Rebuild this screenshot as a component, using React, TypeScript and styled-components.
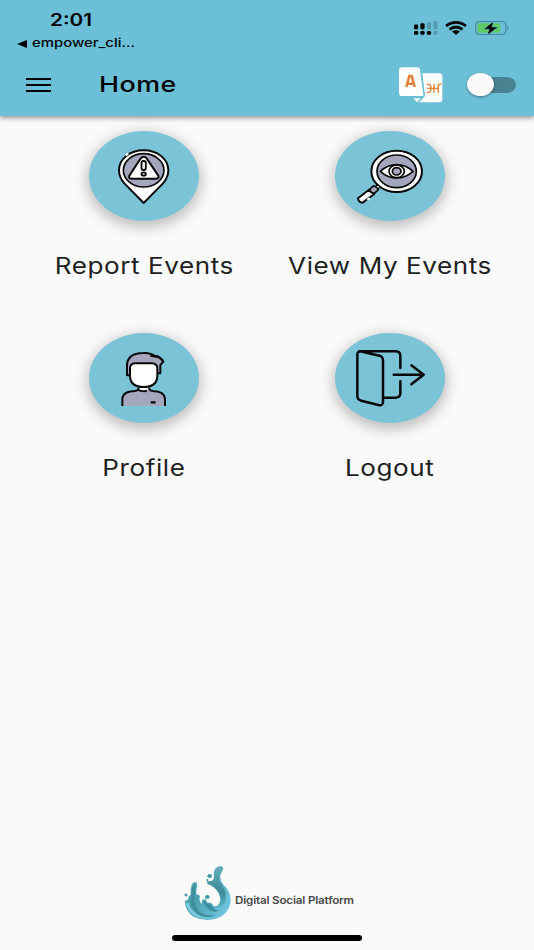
import React from "react";
import styled, { createGlobalStyle } from "styled-components";

const Global = createGlobalStyle`
  * { box-sizing: border-box; }
  body { margin: 0; background: #fafafa; }
`;

const Screen = styled.div`
  width: 534px;
  height: 950px;
  display: flex;
  flex-direction: column;
  overflow: hidden;
  background: #fafafa;
  color: #000;
  font-family: Inter, "Liberation Sans", sans-serif;
`;

const Header = styled.header`
  height: 116px;
  flex: none;
  background: #6bc0d8;
  box-shadow: 0 2px 5px rgba(0, 0, 0, 0.42);
`;

const StatusBar = styled.div`
  height: 53px;
  display: flex;
  justify-content: space-between;
  padding: 10px 24px 0 17px;
`;

const StatusLeft = styled.div`
  display: flex;
  flex-direction: column;
`;

const Wide = styled.span<{ $size: number; $weight?: number; $scale?: number; $spacing?: number }>`
  display: block;
  white-space: nowrap;
  line-height: 1.2;
  font-size: ${(p) => p.$size}px;
  font-weight: ${(p) => p.$weight ?? 400};
  letter-spacing: ${(p) => p.$spacing ?? 0}px;
  transform: scaleX(${(p) => p.$scale ?? 1.22});
  transform-origin: left center;
`;

const TileLabel = styled(Wide)`
  color: #1f1f1f;
  transform-origin: center;
`;

const Clock = styled.div`
  height: 25px;
  padding-left: 33px;
`;

const BackLink = styled.div`
  display: flex;
  align-items: center;
  gap: 5px;
  height: 17px;
`;

const StatusIcons = styled.div`
  display: flex;
  align-items: flex-start;
  padding-top: 11px;
`;

const Toolbar = styled.div`
  height: 63px;
  display: flex;
  align-items: center;
  padding: 0 18px 0 26px;
`;

const MenuButton = styled.button`
  width: 25px;
  height: 14px;
  padding: 0;
  border: 0;
  background: none;
  display: flex;
  flex-direction: column;
  justify-content: space-between;
`;

const MenuLine = styled.span`
  width: 100%;
  height: 2px;
  background: #000;
`;

const Title = styled.div`
  margin-left: 48px;
  flex: 1;
`;

const Switch = styled.div`
  width: 49px;
  height: 24px;
  margin-left: 24px;
  display: flex;
  align-items: center;
`;

const Track = styled.div`
  width: 42px;
  height: 16px;
  margin-left: 7px;
  flex: none;
  border-radius: 9px / 8px;
  background: #498291;
  display: flex;
  align-items: center;
`;

const Thumb = styled.div`
  width: 27px;
  height: 23px;
  flex: none;
  margin-left: -7px;
  border-radius: 50%;
  background: #fafafa;
  box-shadow: 0 1px 3px rgba(0, 0, 0, 0.4);
`;

const Grid = styled.main`
  flex: 1;
  display: grid;
  grid-template-columns: 246px 246px;
  grid-auto-rows: 202px;
  align-content: start;
  padding: 15px 21px 0;
`;

const Tile = styled.div`
  display: flex;
  flex-direction: column;
  align-items: center;
  gap: 31px;
`;

const Disc = styled.div`
  width: 110px;
  height: 90px;
  border-radius: 50%;
  background: #7bc3d6;
  box-shadow: 0 4px 14px 2px rgba(0, 0, 0, 0.25);
  & > svg { display: block; }
`;

const Footer = styled.footer`
  display: flex;
  flex-direction: column;
  align-items: center;
  height: 85px;
`;

const Brand = styled.div`
  width: 167px;
  height: 56px;
  display: flex;
  align-items: center;
  gap: 3px;
  color: #4a4a4a;
`;

const BrandName = styled.div`
  padding-top: 16px;
`;

const HomeBar = styled.div`
  width: 190px;
  height: 6px;
  margin-top: 14px;
  border-radius: 3px;
  background: #000;
`;

const Spacer = styled.span<{ $w: number }>`
  width: ${(p) => p.$w}px;
`;

const Signal = () => (
  <svg width="24" height="14" viewBox="0 0 24 14">
    <g fill="#000">
      <rect x="0" y="3.6" width="4.2" height="4.8" rx="1.3" />
      <rect x="6.4" y="2.3" width="4.2" height="6.1" rx="1.3" />
      <rect x="0" y="10" width="4.2" height="3.7" rx="1.3" />
      <rect x="6.4" y="10" width="4.2" height="3.7" rx="1.3" />
      <rect x="12.9" y="10" width="4.2" height="3.7" rx="1.3" />
    </g>
    <g fill="#559bb0">
      <rect x="12.9" y="1.2" width="4.2" height="7.2" rx="1.3" />
      <rect x="19.3" y="0" width="4.2" height="8.4" rx="1.3" />
      <rect x="19.3" y="10" width="4.2" height="3.7" rx="1.3" />
    </g>
  </svg>
);

const Wifi = () => (
  <svg width="22" height="14" viewBox="0 0 22 14">
    <g fill="none" stroke="#000" strokeWidth="2.8">
      <path d="M1 4.9Q11 -2.3 21 4.9" />
      <path d="M4.5 8.3Q11 3.6 17.5 8.3" />
    </g>
    <path d="M7 10.6Q11 7.6 15 10.6L11 13.7Z" />
  </svg>
);

const Battery = () => (
  <svg width="35" height="16" viewBox="0 0.7 35 16">
    <rect x=".7" y="1.2" width="30.2" height="13" rx="4" fill="none" stroke="#478698" strokeWidth="1.2" />
    <rect x="2.6" y="2.9" width="22.6" height="9.6" rx="2.4" fill="#5ecb62" />
    <path d="M32.4 5.5Q35 7.7 32.4 9.9Z" fill="#478698" />
    <path d="M18.6 1L8.7 8.9H14.2L12.3 15L23 6.7H17Z" fill="#000" stroke="#6bc0d8" strokeWidth=".5" />
  </svg>
);

const TranslateIcon = () => (
  <svg width="44" height="36" viewBox="26 200 132 108">
    <path d="M96 219H147Q156 219 156 229V297Q156 306 147 306H84L103 285Z" fill="#fff" />
    <path d="M36 201H79Q88 201 90 211L100 287H36Q26 287 26 277V211Q26 201 36 201Z" fill="#fff" />
    <path d="M91 207L102 286L84 306" fill="none" stroke="#6bc0d8" strokeWidth="4" />
    <path d="M69 294H91L80 306Z" fill="#fff" />
    <path d="M48 260L57 227H64L73 260M51 250H70" fill="none" stroke="#df8136" strokeWidth="7.5" />
    <path d="M109 252H115Q122 253 122 264T115 276H109M111 264H143M131 250V278M144 278V257Q144 251 153 251" fill="none" stroke="#df8136" strokeWidth="4" />
  </svg>
);

const ReportIcon = () => (
  <svg width="110" height="90" viewBox="27 33 330 270">
    <path d="M191 249L133 190Q117 172 117 151C117 117 150 91 191 91S265 117 265 151Q265 172 249 190Z" fill="#fff" stroke="#090909" strokeWidth="6" strokeLinejoin="round" />
    <ellipse cx="191" cy="151" rx="61" ry="50" fill="#a3a6bd" stroke="#090909" strokeWidth="5" />
    <path d="M182 115Q191 105 200 115L235 167Q238 176 228 176H155Q144 176 148 167Z" fill="#fff" stroke="#090909" strokeWidth="6" />
    <rect x="184.5" y="123" width="13" height="27" rx="6" fill="#fff" stroke="#090909" strokeWidth="5.5" />
    <ellipse cx="191" cy="162" rx="6.5" ry="5" fill="#fff" stroke="#090909" strokeWidth="5.5" />
    <path d="M137 106L145 101" stroke="#fff" strokeWidth="6" />
  </svg>
);

const ViewIcon = () => (
  <svg width="110" height="90" viewBox="30 33 330 270">
    <ellipse cx="215" cy="154" rx="76" ry="62" fill="#fff" stroke="#090909" strokeWidth="6" />
    <ellipse cx="215" cy="154" rx="59" ry="49" fill="#a3a6bd" stroke="#090909" strokeWidth="5" />
    <path d="M166 154Q188 134 215 134T264 154Q242 174 215 174T166 154Z" fill="#fff" stroke="#090909" strokeWidth="5" strokeLinejoin="round" />
    <ellipse cx="215" cy="154" rx="23" ry="19" fill="#fff" stroke="#090909" strokeWidth="5" />
    <ellipse cx="215" cy="154" rx="13" ry="11" fill="#a3a6bd" stroke="#090909" strokeWidth="5" />
    <path d="M148 202L158 194L166 201L156 209Z" fill="#fff" stroke="#090909" strokeWidth="4" />
    <path d="M134 208L145 198Q157 200 160 209L147 221Q136 218 134 208Z" fill="#a3a6bd" stroke="#090909" strokeWidth="5" />
    <path d="M99 235L132 209Q137 219 148 222L113 248Q101 247 99 235Z" fill="#fff" stroke="#090909" strokeWidth="6" strokeLinejoin="round" />
    <path d="M127 240L134 234" stroke="#fff" strokeWidth="6" />
  </svg>
);

const ProfileIcon = () => (
  <svg width="110" height="90" viewBox="27 24 330 270">
    <path d="M127 243V221Q129 199 165 198Q175 197 176 189H207Q208 197 218 198Q253 199 255 221V243Z" fill="#a3a6bd" />
    <path d="M178 186H206V193Q200 202 191 202T177 193Z" fill="#fff" />
    <path d="M127 243V221Q129 199 165 198Q175 197 176 189M255 243V221Q253 199 218 198Q208 197 207 189M173 194Q190 203 201 196" fill="none" stroke="#090909" strokeWidth="6" />
    <path d="M150 151H141V122Q141 85 190 84Q213 83 226 94Q237 92 250 110L241 120V145H232Z" fill="#a3a6bd" stroke="#090909" strokeWidth="6" strokeLinejoin="round" />
    <path d="M150 130Q150 116 165 115H215Q232 116 232 130V154Q230 186 191 186T150 154Z" fill="#fff" stroke="#090909" strokeWidth="6" />
    <path d="M211 92L226 94Q239 94 249 108M212 232H227" fill="none" stroke="#090909" strokeWidth="7" />
  </svg>
);

const LogoutIcon = () => (
  <svg width="110" height="90" viewBox="30 24 330 270">
    <g fill="none" stroke="#090909" strokeWidth="7.5" strokeLinecap="round" strokeLinejoin="round">
      <path d="M103 79H212Q226 80 226 92V129M226 169V206Q225 218 211 218H178M106 79L163 92Q174 95 174 107V230Q174 243 160 240L109 227Q97 224 97 212V89Q97 78 109 79" />
      <path d="M206 149H296M259 121L296 149L259 178" />
    </g>
  </svg>
);

const BrandMark = () => (
  <svg width="48" height="56" viewBox="12 9 144 168">
    <defs>
      <linearGradient id="bowl" x1="0" y1="0" x2="1" y2="0.6">
        <stop offset="0" stopColor="#68b4c1" />
        <stop offset=".45" stopColor="#4ba0ae" />
        <stop offset="1" stopColor="#6bc3dc" />
      </linearGradient>
      <linearGradient id="plume" x1="0" y1="0" x2="0" y2="1">
        <stop offset="0" stopColor="#66b0ba" />
        <stop offset=".6" stopColor="#3c8b99" />
        <stop offset="1" stopColor="#60b8cc" />
      </linearGradient>
    </defs>
    <path
      d="M14 115Q22 119 25 108Q25 101 32 99Q31 62 43 60Q54 60 51 75Q47 88 50 98Q57 97 60 103Q56 113 62 123Q68 128 65 118Q66 110 76 112Q82 116 81 122Q94 119 98 127Q100 136 110 133Q124 124 120 104Q116 89 101 75Q94 67 84 67Q78 62 83 57Q99 60 102 49Q99 28 107 19Q119 9 128 15Q132 20 125 31Q114 49 130 68Q153 87 152 120Q145 157 112 169Q77 181 41 164Q16 150 14 115Z"
      fill="url(#bowl)"
    />
    <path d="M104 42Q102 22 115 16Q127 10 128 18L119 31Q111 50 126 69Q144 95 134 124Q123 143 101 139L97 131Q115 139 122 115Q121 91 101 75L84 65L83 58Q100 63 104 42Z" fill="url(#plume)" />
    <path d="M37 76Q41 64 47 66Q46 87 44 101Q40 132 61 151Q76 163 105 159Q84 171 59 160Q31 143 32 114Z" fill="#408f9d" />
    <path d="M70 118Q77 114 80 126Q93 121 96 132Q99 140 107 144L118 145Q104 153 90 145Q75 135 70 118Z" fill="#3e8f9c" />
    <path d="M17 124Q22 151 45 162Q77 178 112 166Q88 171 64 164Q36 153 26 124Z" fill="#79cbdc" />
    <g fill="#4298a8">
      <ellipse cx="89" cy="42" rx="7" ry="6" />
      <ellipse cx="82" cy="105" rx="7" ry="6" />
      <ellipse cx="18" cy="99" rx="4.5" ry="4.5" />
      <ellipse cx="82" cy="54" rx="3" ry="3" />
    </g>
  </svg>
);

const tiles = [
  { label: "Report Events", icon: <ReportIcon /> },
  { label: "View My Events", icon: <ViewIcon /> },
  { label: "Profile", icon: <ProfileIcon /> },
  { label: "Logout", icon: <LogoutIcon /> },
];

export default function App() {
  return (
    <Screen>
      <Global />
      <Header>
        <StatusBar>
          <StatusLeft>
            <Clock><Wide $size={17} $weight={600}>2:01</Wide></Clock>
            <BackLink>
              <svg width="10" height="8" viewBox="0 0 10 8"><path d="M0 4L10 0V8Z" /></svg>
              <Wide $size={12} $weight={500} $scale={1.24}>empower_cli...</Wide>
            </BackLink>
          </StatusLeft>
          <StatusIcons>
            <Signal />
            <Spacer $w={7} />
            <Wifi />
            <Spacer $w={8} />
            <Battery />
          </StatusIcons>
        </StatusBar>
        <Toolbar>
          <MenuButton aria-label="Menu"><MenuLine /><MenuLine /><MenuLine /></MenuButton>
          <Title><Wide $size={22} $weight={500} $spacing={0.4}>Home</Wide></Title>
          <TranslateIcon />
          <Switch><Track><Thumb /></Track></Switch>
        </Toolbar>
      </Header>
      <Grid>
        {tiles.map((t) => (
          <Tile key={t.label}>
            <Disc>{t.icon}</Disc>
            <TileLabel $size={22.5} $scale={1.158} $spacing={0.5}>{t.label}</TileLabel>
          </Tile>
        ))}
      </Grid>
      <Footer>
        <Brand>
          <BrandMark />
          <BrandName><Wide $size={10.4} $weight={600} $scale={1.115} $spacing={-0.15}>Digital Social Platform</Wide></BrandName>
        </Brand>
        <HomeBar />
      </Footer>
    </Screen>
  );
}
